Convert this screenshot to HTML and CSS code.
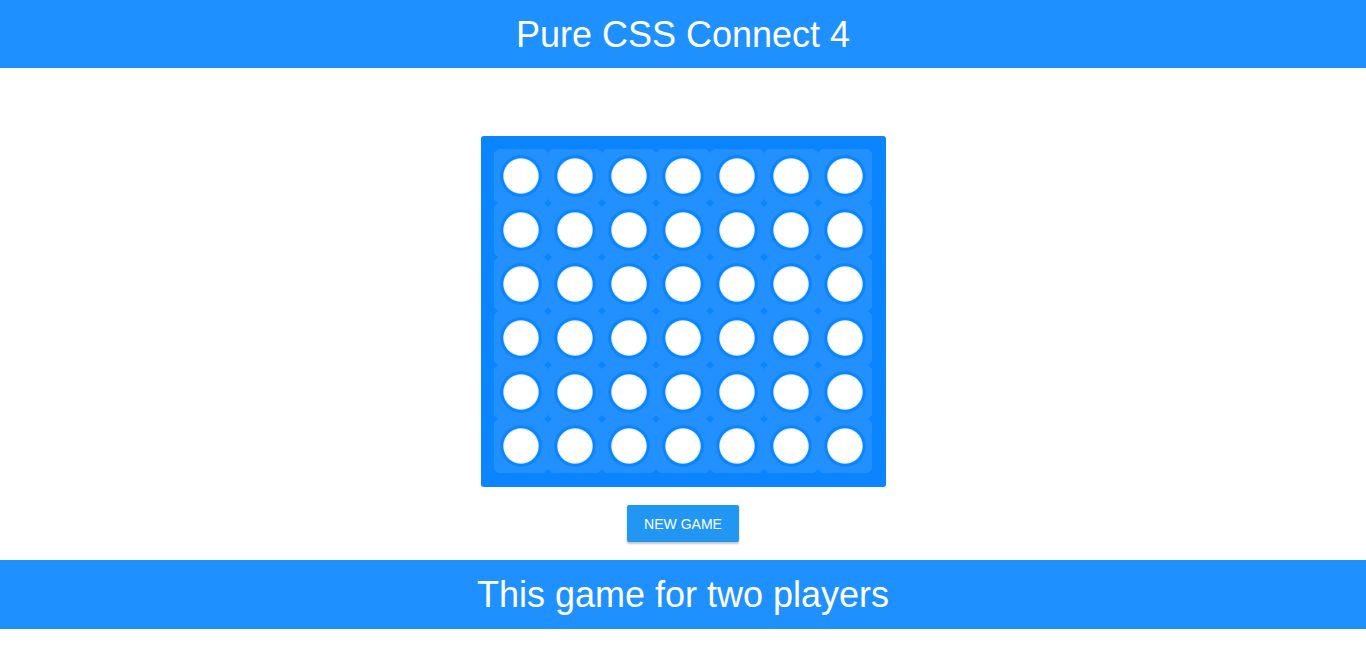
FILE: index.html
```html
<!DOCTYPE html>
<html lang="en">
<head>
<meta charset="utf-8">
<title>Pure CSS Connect 4</title>
<link rel="stylesheet" href="styles.css">
</head>
<body>
<header class="bar">
  <h1 class="bar-title">Pure CSS Connect 4</h1>
</header>
<main class="game">
  <div class="board">
    <div class="cell"></div><div class="cell"></div><div class="cell"></div><div class="cell"></div><div class="cell"></div><div class="cell"></div><div class="cell"></div>
    <div class="cell"></div><div class="cell"></div><div class="cell"></div><div class="cell"></div><div class="cell"></div><div class="cell"></div><div class="cell"></div>
    <div class="cell"></div><div class="cell"></div><div class="cell"></div><div class="cell"></div><div class="cell"></div><div class="cell"></div><div class="cell"></div>
    <div class="cell"></div><div class="cell"></div><div class="cell"></div><div class="cell"></div><div class="cell"></div><div class="cell"></div><div class="cell"></div>
    <div class="cell"></div><div class="cell"></div><div class="cell"></div><div class="cell"></div><div class="cell"></div><div class="cell"></div><div class="cell"></div>
    <div class="cell"></div><div class="cell"></div><div class="cell"></div><div class="cell"></div><div class="cell"></div><div class="cell"></div><div class="cell"></div>
  </div>
  <button class="new-game" type="button">New Game</button>
</main>
<footer class="bar">
  <h2 class="bar-title">This game for two players</h2>
</footer>
</body>
</html>
```

FILE: styles.css
```css
html, body {
  margin: 0;
  padding: 0;
  background: #fff;
  font-family: "Liberation Sans", Arial, sans-serif;
}

.bar {
  background: #1e90ff;
  color: #fff;
  height: 68px;
  display: flex;
  align-items: center;
  justify-content: center;
}

.bar-title {
  margin: 0;
  font-size: 36px;
  font-weight: normal;
  line-height: 41px;
}

footer.bar {
  height: 69px;
  margin-top: 18px;
}

.game {
  padding-top: 68px;
  display: flex;
  flex-direction: column;
  align-items: center;
}

.board {
  display: grid;
  grid-template-columns: repeat(7, 54px);
  grid-template-rows: repeat(6, 54px);
  padding: 13px 14px 14px 13px;
  background: #0a84ff;
  border-radius: 3px;
}

.cell {
  width: 54px;
  height: 54px;
  background: radial-gradient(circle at center,
    #ffffff 0,
    #ffffff 16px,
    #e3f0ff 17.2px,
    #0b85ff 18.2px,
    #0b85ff 20.3px,
    #2390ff 21.3px,
    #2390ff 35px,
    #0a84ff 36px);
}

.new-game {
  margin-top: 18px;
  width: 112px;
  height: 37px;
  padding: 0;
  border: 0;
  border-radius: 2px;
  background: #2196f3;
  color: #fff;
  font-family: "Liberation Sans", Arial, sans-serif;
  font-size: 14px;
  text-transform: uppercase;
  box-shadow: 0 2px 2px rgba(0, 0, 0, 0.22), 0 0 1px rgba(0, 0, 0, 0.12);
  cursor: pointer;
}
```
